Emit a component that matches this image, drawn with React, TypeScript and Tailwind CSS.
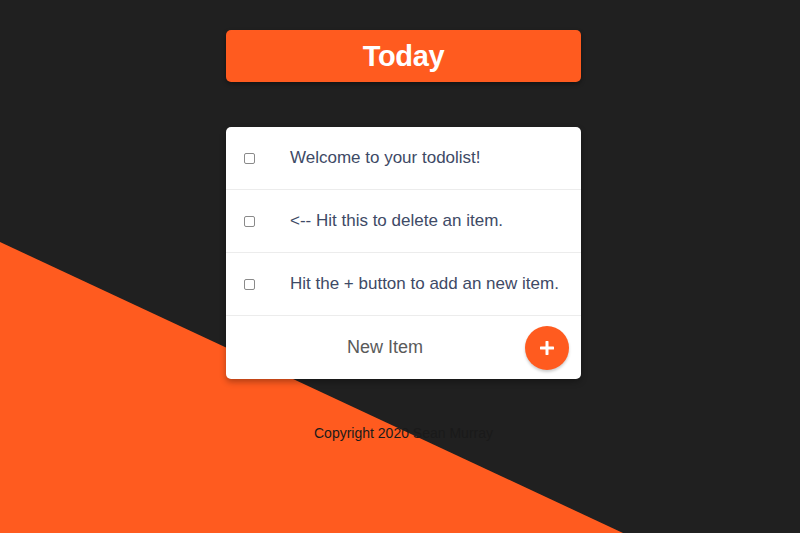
export default function App() {
  const items = [
    "Welcome to your todolist!",
    "<-- Hit this to delete an item.",
    "Hit the + button to add an new item.",
  ];
  return (
    <div className="relative w-[800px] h-[533px] overflow-hidden bg-[#202020]" style={{ fontFamily: '"Liberation Sans", Arial, sans-serif' }}>
      <svg className="absolute inset-0" width="800" height="533" viewBox="0 0 800 533">
        <polygon points="0,242 623,533 0,533" fill="#ff5b1f" />
      </svg>
      <div className="relative flex flex-col items-center pt-[30px] pl-[7px]">
        <div className="w-[355px] h-[52px] rounded-[5px] bg-[#ff5b1f] flex items-center justify-center shadow-[0_2px_4px_rgba(0,0,0,0.4)]">
          <h1 className="text-white font-bold text-[29px] tracking-[-0.3px] mt-[2px]">Today</h1>
        </div>
        <div className="mt-[45px] w-[355px] rounded-[5px] bg-white shadow-[0_3px_6px_rgba(0,0,0,0.3)] overflow-hidden">
          {items.map((t) => (
            <div key={t} className="h-[63px] flex items-center border-b border-[#ececec]">
              <span className="ml-[18px] w-[11px] h-[11px] rounded-[2px] border border-[#8a8a8a] bg-white" />
              <span className="ml-[35px] text-[17px] text-[#3e4a66]">{t}</span>
            </div>
          ))}
          <div className="h-[63px] flex items-center">
            <span className="ml-[121px] text-[18px] text-[#5a5a5a]">New Item</span>
            <button className="ml-auto mr-[12px] w-[44px] h-[44px] rounded-full bg-[#ff5b1f] flex items-center justify-center shadow-[0_2px_3px_rgba(0,0,0,0.2)]">
              <svg width="14" height="14" viewBox="0 0 14 14">
                <path d="M7 1v12M1 7h12" stroke="white" strokeWidth="3" strokeLinecap="round" />
              </svg>
            </button>
          </div>
        </div>
        <p className="mt-[44px] text-[14px] text-[#1a1a1a]">Copyright 2020 Sean Murray</p>
      </div>
    </div>
  );
}
